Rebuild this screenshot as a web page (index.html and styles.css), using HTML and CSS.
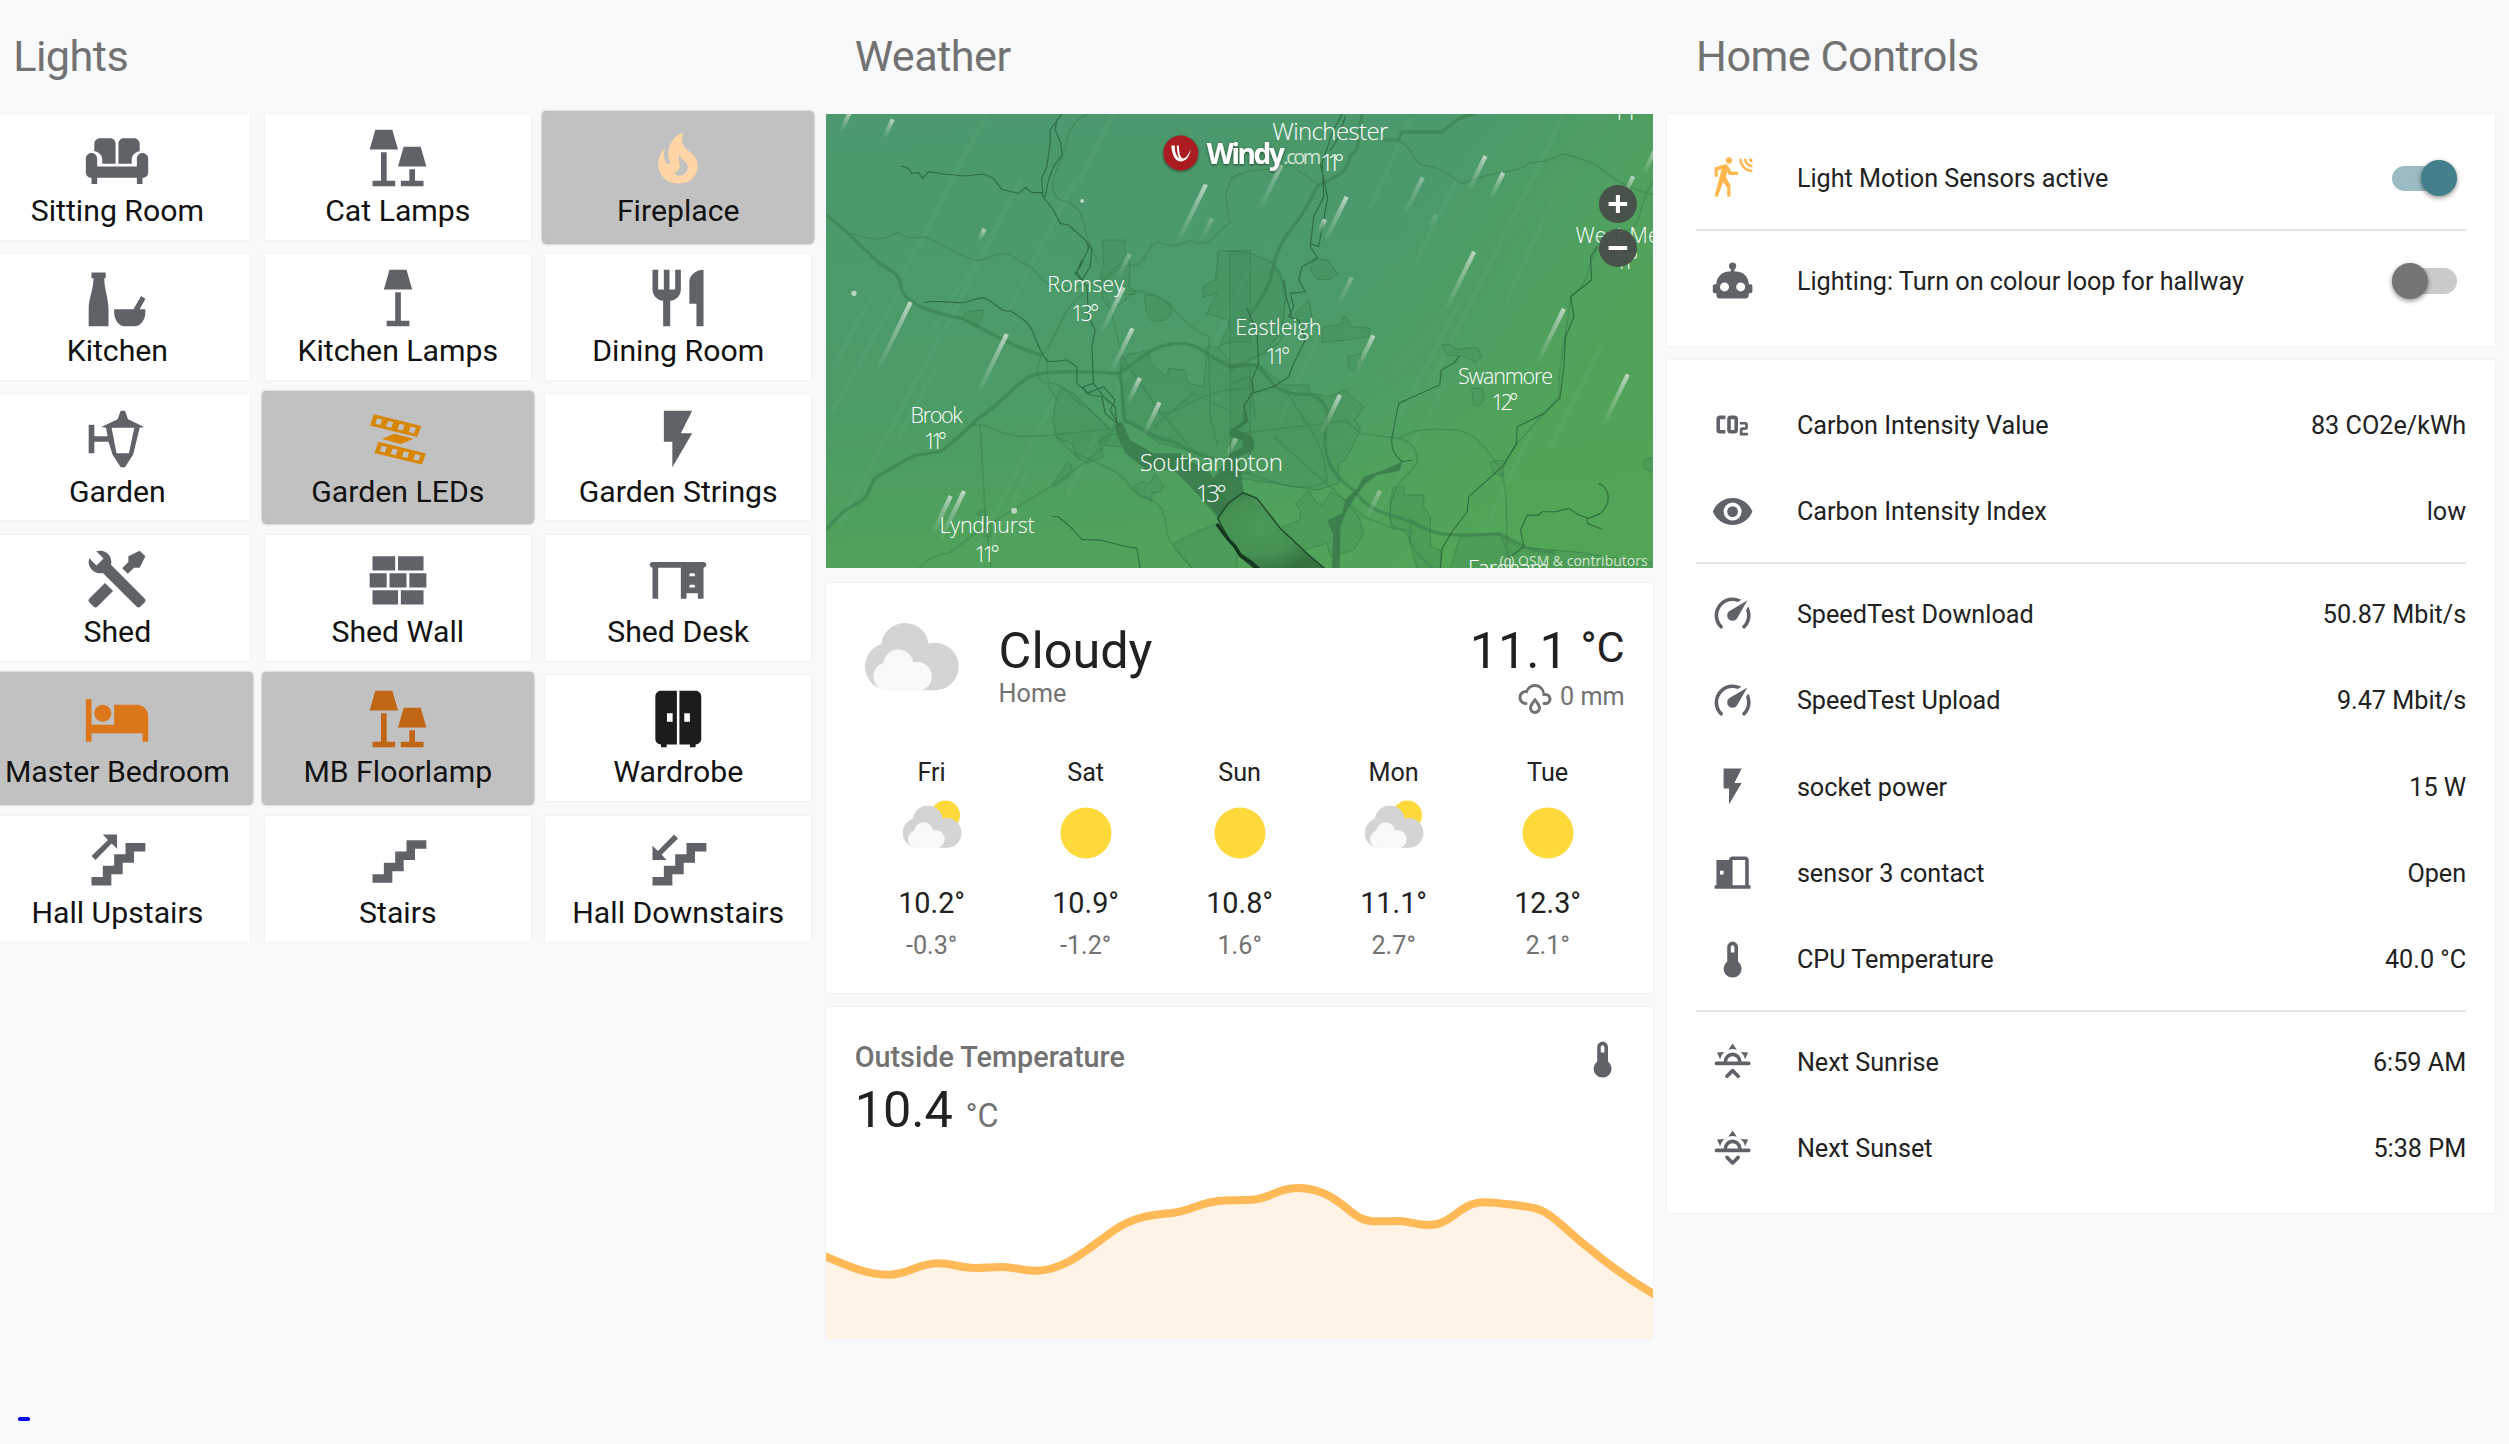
FILE: index.html
```html
<!DOCTYPE html>
<html lang="en">
<head>
<meta charset="utf-8">
<title>Home</title>
<link rel="stylesheet" href="styles.css">
</head>
<body>
<svg class="defs" width="0" height="0">
  <symbol id="lamps" viewBox="0 0 24 24"><path d="M4 2H10L12 9H2Z M6 10H8V20H11V22H3V20H6Z M14 8H20L22 15H12Z M16 16H18V20H21V22H13V20H16Z"/></symbol>
  <symbol id="flash" viewBox="0 0 24 24"><path d="M7,2V13H10V22L17,10H13L17,2H7Z"/></symbol>
  <symbol id="thermometer" viewBox="0 0 24 24"><path d="M15 13V5A3 3 0 0 0 9 5V13A5 5 0 1 0 15 13M12 4A1 1 0 0 1 13 5V8H11V5A1 1 0 0 1 12 4Z"/></symbol>
  <symbol id="speedometer" viewBox="0 0 24 24"><path d="M12,16A3,3 0 0,1 9,13C9,11.88 9.61,10.9 10.5,10.39L20.21,4.77L14.68,14.35C14.18,15.33 13.17,16 12,16M12,3C13.81,3 15.5,3.5 16.97,4.32L14.87,5.53C14,5.19 13,5 12,5A8,8 0 0,0 4,13C4,15.21 4.89,17.21 6.34,18.65H6.35C6.74,19.04 6.74,19.67 6.35,20.06C5.96,20.45 5.32,20.45 4.93,20.07C3.12,18.26 2,15.76 2,13A10,10 0 0,1 12,3M22,13C22,15.76 20.88,18.26 19.07,20.07C18.68,20.45 18.05,20.45 17.66,20.06C17.27,19.67 17.27,19.04 17.66,18.65C19.11,17.2 20,15.21 20,13C20,12 19.81,11 19.46,10.1L20.67,8C21.5,9.5 22,11.18 22,13Z"/></symbol>
  <symbol id="horizon" viewBox="0 0 24 24"><path d="M3,12H7A5,5 0 0,1 12,7A5,5 0 0,1 17,12H21A1,1 0 0,1 22,13A1,1 0 0,1 21,14H3A1,1 0 0,1 2,13A1,1 0 0,1 3,12M15,12A3,3 0 0,0 12,9A3,3 0 0,0 9,12H15M12,2L14.39,5.42C13.65,5.15 12.84,5 12,5C11.16,5 10.35,5.15 9.61,5.42L12,2M3.34,7L7.5,6.65C6.9,7.16 6.36,7.78 5.94,8.5C5.5,9.24 5.25,10 5.11,10.79L3.34,7M20.65,7L18.88,10.79C18.74,10 18.47,9.23 18.05,8.5C17.63,7.78 17.1,7.15 16.5,6.64L20.65,7"/></symbol>
  <symbol id="cloud" viewBox="0 0 95 69">
    <g fill="#d4d4d4"><circle cx="40.6" cy="24.4" r="24"/><circle cx="24.2" cy="44.2" r="23.8"/><circle cx="70.8" cy="44.2" r="23.8"/><rect x="24.2" y="30" width="46.6" height="38"/></g>
    <g fill="#f9f9f9"><circle cx="34" cy="42" r="15"/><circle cx="23.6" cy="54.2" r="14.6"/><circle cx="53" cy="54.2" r="14.6"/><rect x="23.6" y="44" width="29.4" height="24.8"/></g>
  </symbol>
  <symbol id="partly" viewBox="0 0 72 72">
    <circle cx="49.4" cy="18" r="14.6" fill="#fdd93c"/>
    <use href="#cloud" x="6.4" y="8.3" width="59.4" height="43.1"/>
  </symbol>
  <symbol id="sunny" viewBox="0 0 72 72"><circle cx="36" cy="36" r="25.5" fill="#fdd93c"/></symbol>
</svg>

<main class="dashboard">
  <section class="column">
    <h1 class="title">Lights</h1>
    <div class="lights">
      <div class="light"><svg viewBox="0 0 24 24"><path d="M6 5H9.7C10.8 5 11.5 5.9 11.5 7V14H6.8V12.5C6.8 11 5.6 9.8 4 9.6V7C4 5.9 4.9 5 6 5ZM18 5H14.3C13.2 5 12.5 5.9 12.5 7V14H17.2V12.5C17.2 11 18.4 9.8 20 9.6V7C20 5.9 19.1 5 18 5ZM3 10.2C1.9 10.2 1 11.1 1 12.2V17C1 18.1 1.9 19 3 19V21.2H5V19H19V21.2H21V19C22.1 19 23 18.1 23 17V12.2C23 11.1 22.1 10.2 21 10.2C19.9 10.2 19 11.1 19 12.2V15H5V12.2C5 11.1 4.1 10.2 3 10.2Z"/></svg><span>Sitting Room</span></div>
      <div class="light"><svg><use href="#lamps"/></svg><span>Cat Lamps</span></div>
      <div class="light on fire"><svg viewBox="0 0 24 24"><path d="M17.66 11.2C17.43 10.9 17.15 10.64 16.89 10.38C16.22 9.78 15.46 9.35 14.82 8.72C13.33 7.26 13 4.85 13.95 3C13 3.23 12.17 3.75 11.46 4.32C8.87 6.4 7.85 10.07 9.07 13.22C9.11 13.32 9.15 13.42 9.15 13.55C9.15 13.77 9 13.97 8.8 14.05C8.57 14.15 8.33 14.09 8.14 13.93C8.08 13.88 8.04 13.83 8 13.76C6.87 12.33 6.69 10.28 7.45 8.64C5.78 10 4.87 12.3 5 14.47C5.06 14.97 5.12 15.47 5.29 15.97C5.43 16.57 5.7 17.17 6 17.7C7.08 19.43 8.95 20.67 10.96 20.92C13.1 21.19 15.39 20.8 17.03 19.32C18.86 17.66 19.5 15 18.56 12.72L18.43 12.46C18.22 12 17.66 11.2 17.66 11.2M14.5 17.5C14.22 17.74 13.76 18 13.4 18.1C12.28 18.5 11.16 17.94 10.5 17.28C11.69 17 12.4 16.12 12.61 15.23C12.78 14.43 12.46 13.77 12.33 13C12.21 12.26 12.23 11.63 12.5 10.94C12.69 11.32 12.89 11.7 13.13 12C13.9 13 15.11 13.44 15.37 14.8C15.41 14.94 15.43 15.08 15.43 15.23C15.46 16.05 15.1 16.95 14.5 17.5Z"/></svg><span>Fireplace</span></div>

      <div class="light"><svg viewBox="0 0 24 24"><path d="M3 3H8V5H7.5C7.5 9 9 12 9 16V22H2V16C2 12 3.7 9 3.7 5H3ZM11 16H17.8L20.5 11.3L22 12.3L20 16H22V17C22 19.5 20.5 22 18.2 22H14.8C12.5 22 11 19.5 11 17Z"/></svg><span>Kitchen</span></div>
      <div class="light"><svg viewBox="0 0 24 24"><path d="M9 2H15L17 9H7Z M11 10H13V20H16V22H8V20H11Z"/></svg><span>Kitchen Lamps</span></div>
      <div class="light"><svg viewBox="0 0 24 24"><path d="M11,9H9V2H7V9H5V2H3V9C3,11.12 4.66,12.84 6.75,12.97V22H9.25V12.97C11.34,12.84 13,11.12 13,9V2H11V9M16,6V14H18.5V22H21V2C18.24,2 16,4.24 16,6Z"/></svg><span>Dining Room</span></div>

      <div class="light"><svg viewBox="0 0 24 24"><path fill-rule="evenodd" d="M2 7H4V11H8.7L8.1 8L6.5 7.8L12.2 5L13.3 2H14.8L15.9 5L21.6 7.8L20 8L17.7 17.5L14.8 22H13.3L10.4 17.5L9 13H4V17H2ZM10.1 8L11.8 17H16.2L18.1 8Z"/></svg><span>Garden</span></div>
      <div class="light on led"><svg viewBox="0 0 24 24"><defs><path id="strip" fill-rule="evenodd" d="M0 0H1V1H0Z M.09 .26V.76H.2V.26Z M.32 .26V.76H.43V.26Z M.56 .26V.76H.67V.26Z M.8 .26V.76H.91V.26Z"/></defs><use href="#strip" transform="matrix(16.7 4.1 -1.4 3.9 3.5 3.3)"/><path d="M6.4 12L10.7 10.1L17.5 11.9L13 13.8Z"/><use href="#strip" transform="matrix(16.7 4.1 -1.4 3.9 5.1 13)"/></svg><span>Garden LEDs</span></div>
      <div class="light"><svg><use href="#flash"/></svg><span>Garden Strings</span></div>

      <div class="light"><svg viewBox="0 0 24 24"><path d="M21.71 20.29L20.29 21.71A1 1 0 0 1 18.88 21.71L7 9.85A3.81 3.81 0 0 1 6 10A4 4 0 0 1 2.22 4.7L4.76 7.24L5.29 6.71L6.71 5.29L7.24 4.76L4.7 2.22A4 4 0 0 1 10 6A3.81 3.81 0 0 1 9.85 7L21.71 18.88A1 1 0 0 1 21.71 20.29M2.29 18.88A1 1 0 0 0 2.29 20.29L3.71 21.71A1 1 0 0 0 5.12 21.71L10.59 16.25L7.76 13.42M20 2L16 4V6L13.83 8.17L15.83 10.17L18 8H20L22 4Z"/></svg><span>Shed</span></div>
      <div class="light"><svg viewBox="0 0 24 24"><path d="M3,16H12V21H3V16M2,10H8V15H2V10M9,10H15V15H9V10M16,10H22V15H16V10M13,16H21V21H13V16M3,4H11V9H3V4M12,4H21V9H12V4Z"/></svg><span>Shed Wall</span></div>
      <div class="light"><svg viewBox="0 0 24 24"><path d="M3 6H21C21.55 6 22 6.45 22 7C22 7.55 21.55 8 21 8V19H19V17H15V19H13V8H5V19H3V8C2.45 8 2 7.55 2 7C2 6.45 2.45 6 3 6M16 10.5V11H18V10.5C18 10.22 17.78 10 17.5 10H16.5C16.22 10 16 10.22 16 10.5M16 14.5V15H18V14.5C18 14.22 17.78 14 17.5 14H16.5C16.22 14 16 14.22 16 14.5Z"/></svg><span>Shed Desk</span></div>

      <div class="light on bed"><svg viewBox="0 0 24 24"><path d="M19 7H11V14H3V5H1V20H3V17H21V20H23V11C23 8.79 21.21 7 19 7M7 13C8.66 13 10 11.66 10 10C10 8.34 8.66 7 7 7C5.34 7 4 8.34 4 10C4 11.66 5.34 13 7 13Z"/></svg><span>Master Bedroom</span></div>
      <div class="light on floorlamp"><svg><use href="#lamps"/></svg><span>MB Floorlamp</span></div>
      <div class="light wardrobe"><svg viewBox="0 0 24 24"><path fill-rule="evenodd" d="M11.6 2H6C4.9 2 4 2.9 4 4V19C4 20.1 4.9 21 6 21V22H8V21H11.6ZM8.1 10H10.1V13H8.1Z M12.5 2H18.2C19.3 2 20.2 2.9 20.2 4V19C20.2 20.1 19.3 21 18.2 21V22H16.2V21H12.5ZM14.2 10V13H16.2V10Z"/></svg><span>Wardrobe</span></div>

      <div class="light"><svg viewBox="0 0 24 24"><path d="M22 6V9H18V13H14V17H10V21H3V18H7V14H11V10H15V6Z M12 8V3H7L8.8 4.9L3 10.6L4.4 12L10.1 6.2Z"/></svg><span>Hall Upstairs</span></div>
      <div class="light"><svg viewBox="0 0 24 24"><path d="M15,5V9H11V13H7V17H3V20H10V16H14V12H18V8H22V5H15Z"/></svg><span>Stairs</span></div>
      <div class="light"><svg viewBox="0 0 24 24"><path d="M22 6V9H18V13H14V17H10V21H3V18H7V14H11V10H15V6Z M3 7V12H8L6.2 10.1L12 4.4L10.6 3L4.9 8.8Z"/></svg><span>Hall Downstairs</span></div>
    </div>
  </section>

  <section class="column">
    <h1 class="title">Weather</h1>
    <div class="map">
      <svg viewBox="0 0 827 454.6" preserveAspectRatio="none">
        <defs>
          <linearGradient id="land" x1=".3" y1="0" x2=".4" y2="1"><stop offset="0" stop-color="#4b996c"/><stop offset=".6" stop-color="#4c9b68"/><stop offset=".8" stop-color="#4e9f5f"/><stop offset="1" stop-color="#51a35a"/></linearGradient>
          <linearGradient id="east" x1="0" y1="0" x2="1" y2=".35"><stop offset=".7" stop-color="#52a45a" stop-opacity="0"/><stop offset="1" stop-color="#53a555" stop-opacity=".8"/></linearGradient>
          <linearGradient id="fade" x1="0" y1="0" x2="0" y2="1"><stop offset="0" stop-color="#cfdfd1" stop-opacity=".85"/><stop offset=".35" stop-color="#c3dac8" stop-opacity=".5"/><stop offset="1" stop-color="#b5d4bd" stop-opacity=".03"/></linearGradient>
          <rect id="gust" x="-6.5" y="0" width="13" height="1" fill="url(#fade)"/>
          <radialGradient id="water" cx=".4" cy=".45" r=".6"><stop offset="0" stop-color="#4a9a58"/><stop offset=".6" stop-color="#459052"/><stop offset="1" stop-color="#35723f"/></radialGradient>
          <filter id="glow" x="-20%" y="-30%" width="140%" height="170%"><feDropShadow dx="0" dy="1" stdDeviation="1.8" flood-color="#000" flood-opacity=".55"/></filter>
        </defs>
        <rect width="827" height="455" fill="url(#land)"/>
        <rect width="827" height="455" fill="url(#east)"/>

        <!-- western half -->
        <g transform="translate(-6 -14) scale(.33333)" class="geo">
          <g class="streaks"><path d="M500 42L250 520M600 240L380 680M240 570L40 930M360 710L60 1270M760 250L560 640M470 480L340 690M880 42L780 240M960 740L740 1190M700 900L480 1330M620 1120L480 1400M350 800L230 1020M150 600L40 800"/></g>
          <g class="town">
            <path d="M848 420H914V450L930 490L926 560L944 572V584L910 582L870 545L835 560L850 490Z"/>
            <path d="M975 585L1010 588L1052 612V645L1035 660L995 665L978 630Z"/>
            <path d="M1260 452H1195L1185 540L1148 560V590L1190 580L1160 640L1225 660V680L1200 735L1240 725H1290V452Z"/>
            <path d="M725 862L760 880L815 935L870 990L840 1030L850 1070L800 1090L770 1070L755 1030L710 1015L698 960L708 900Z"/>
            <path d="M425 655L440 635L490 630L488 645L470 680Z"/>
            <path d="M900 770L985 750L990 790L1040 830L1045 805L1095 810L1103 850L1150 860L1160 740L1195 740L1240 800L1290 800V1120L1180 1130L1100 1050L1020 1030L960 990L910 960Z"/>
            <path d="M695 1155L740 1090L755 1095L750 1125L705 1160Z"/>
            <path d="M935 1165L960 1145L990 1150L1005 1120L1030 1160L1020 1175L995 1180V1202L960 1190Z"/>
            <path d="M1060 1330L1120 1300L1190 1270L1250 1350V1405H1115Z"/>
            <path d="M470 1240Q470 1230 495 1230L500 1270L512 1275V1310H490L495 1260Z"/>
            <path d="M835 1025L850 1010L890 1000L905 1040L850 1035Z"/>
          </g>
          <path class="deep" d="M880 975L905 965L930 1020L1000 1060L1080 1060L1170 1120L1225 1210L1195 1255L1130 1180L1060 1110L980 1110L915 1060Z"/>
          <g class="road wide"><path d="M18 345C80 390 120 435 180 492C215 512 240 520 245 570C260 610 320 635 425 655L580 735L660 765M18 1290C60 1240 80 1225 120 1205C150 1190 145 1155 170 1130L280 1067L360 1055C400 1030 430 995 480 950C540 915 600 835 640 825C700 810 790 815 895 820C950 790 990 730 1080 730C1150 730 1180 790 1240 800M895 820C915 860 900 910 915 965C960 970 990 1015 1040 1020C1080 1025 1100 1060 1180 1075"/></g>
          <g class="road"><path d="M95 400C150 420 180 425 235 398C270 425 300 405 320 412C370 430 420 475 475 482C510 475 530 455 575 463C600 500 620 480 650 520C680 560 720 575 790 555C850 560 880 490 950 495C980 480 985 425 1015 427C1060 440 1070 440 1110 422C1180 450 1170 400 1230 370C1210 300 1210 240 1260 220M800 42C740 70 740 130 730 165C700 220 680 280 720 300C790 310 790 370 800 410L835 490M790 580C710 640 730 690 665 765C650 800 640 840 680 850L710 900M680 770Q680 850 690 850C740 850 750 905 800 920L870 985M850 560L880 660L905 770L1020 935L1125 1060M905 490C860 510 840 560 850 600C870 640 880 630 945 572C1060 580 1080 680 1165 710L1170 950L1190 1030M1020 940C1100 940 1110 870 1290 865M480 975L495 1240L512 1400M450 975C500 965 540 1005 600 1010L700 1005L880 985L850 1040L790 1090L700 1155L495 1280L385 1360C330 1365 320 1385 295 1405M770 1060C870 1110 900 1110 935 1165C1000 1220 1030 1180 1040 1300C1060 1360 1100 1380 1115 1405M920 770L895 820M1000 980L1120 880L1240 940M710 1010L780 1080"/></g>
          <g class="river"><path d="M245 198L265 205L275 220L295 218L308 235L325 215L370 222L435 228L490 222L520 235L545 268L595 280L617 262L635 278L665 278M725 42L690 90V130L680 200L665 235L668 290L700 330L720 370L745 375L800 425L805 445L780 500L765 520L800 560L805 650L825 690L815 740L820 850L850 890L885 920L890 970M710 60L705 90L722 130L725 165L700 200L685 240L675 290M313 608C340 600 360 605 425 608C460 605 470 590 492 594C520 600 540 640 570 632C600 650 630 670 640 700C660 750 670 780 690 785L740 780L770 800V850L810 885L845 890L855 940L890 970M800 425L815 450L810 500L785 540L770 515L785 480M820 850L790 860L800 880L850 860L885 900L870 930L895 975M698 1250L715 1250L750 1280L785 1318L840 1320L910 1338L950 1345L960 1405"/></g>
          <g class="dots"><circle cx="102" cy="580" r="8"/><circle cx="786" cy="303" r="6"/><circle cx="582" cy="1232" r="9"/></g>
          <g>
            <use href="#gust" transform="translate(90 36) rotate(25) scale(1 62)"/>
            <use href="#gust" transform="translate(218 58) rotate(25) scale(1 60)"/>
            <use href="#gust" transform="translate(493 387) rotate(25) scale(1 38)"/>
            <use href="#gust" transform="translate(1157 253) rotate(26) scale(1 190)"/>
            <use href="#gust" transform="translate(272 606) rotate(26) scale(1 230)"/>
            <use href="#gust" transform="translate(560 702) rotate(26) scale(1 200)"/>
            <use href="#gust" transform="translate(910 562) rotate(26) scale(1 150)"/>
            <use href="#gust" transform="translate(937 685) rotate(26) scale(1 145)"/>
            <use href="#gust" transform="translate(959 834) rotate(26) scale(1 85)"/>
            <use href="#gust" transform="translate(1018 907) rotate(26) scale(1 112)"/>
            <use href="#gust" transform="translate(392 1188) rotate(26) scale(1 125)"/>
            <use href="#gust" transform="translate(432 1173) rotate(26) scale(1 165)"/>
            <use href="#gust" transform="translate(1175 355) rotate(26) scale(1 75)" opacity=".4"/>
            <use href="#gust" transform="translate(1247 1015) rotate(26) scale(1 60)"/>
            <use href="#gust" transform="translate(928 462) rotate(26) scale(1 90)" opacity=".5"/>
          </g>
        </g>

        <!-- eastern half -->
        <g transform="translate(404 -14) scale(.33333)" class="geo">
          <g class="streaks"><path d="M1000 42L600 850M680 240L560 480M960 310L830 600M260 720L140 980M640 860L420 1290M1110 740L960 1040M680 620L480 1000M900 1000L760 1300M60 500L-60 760M540 60L420 320"/></g>
          <g class="town">
            <path d="M0 452L60 460L130 488L150 520L165 600L150 700L100 760L0 800Z"/>
            <path d="M250 475L290 480L320 520L300 538H260L243 515Z"/>
            <path d="M160 855L235 855L240 880L300 890L340 870L400 920L375 960L390 990L345 1080L325 1090V1150L260 1170L0 1130V800L80 790Z"/>
            <path d="M280 680L325 675L345 648L365 680L418 685L415 710L330 722L275 725Z"/>
            <path d="M635 735L655 732L680 748L740 742L755 770L735 787L705 770L650 765Z"/>
            <path d="M725 865H755L760 900L745 918L730 915Z"/>
            <path d="M195 640L235 600L245 650L225 680L205 670Z"/><path d="M355 770L390 760L392 790L370 812L355 800Z"/>
            <path d="M490 1160H520V1185H580V1220L600 1250V1340L630 1350V1405H560L530 1300L480 1270V1200Z"/>
            <path d="M690 1310L800 1300L860 1340L1030 1355L1269 1390V1407H660Z"/>
            <path d="M780 1085L820 1080L818 1130L790 1120Z"/><path d="M1269 1072L1240 1080V1105L1269 1118Z"/>
            <path d="M155 1280L210 1260V1230L195 1210L235 1170L260 1212H280L300 1175L345 1200L385 1250L400 1300L370 1350L300 1370L290 1330L220 1350Z"/>
          </g>
          <g class="road wide"><path d="M395 42C380 130 390 150 360 165C350 220 320 230 265 255C240 290 230 330 195 370C130 450 130 500 120 540C100 590 80 610 65 640M460 120H505L515 96H635C670 70 680 50 730 42M0 800C80 780 90 800 130 855C180 890 210 880 245 885C320 920 280 970 283 1030C290 1090 310 1130 370 1170C420 1240 470 1240 545 1265C620 1310 640 1308 810 1302C880 1340 890 1350 970 1358"/></g>
          <g class="road"><path d="M0 235C60 200 120 215 180 195L265 255M505 120C570 160 530 190 600 200C670 215 670 250 700 250C790 210 870 220 895 188C950 190 980 165 1000 162C1060 180 1100 190 1120 215C1160 240 1180 260 1269 285M1269 240C1220 320 1240 340 1210 380L1100 450C1060 500 1090 540 1020 590C1010 700 980 800 985 890L860 1030L820 1090M130 500C180 560 160 600 160 700C150 740 100 760 0 810M165 860C200 950 280 1000 290 1140C250 1170 200 1180 0 1100M30 1000L290 970L345 960L390 1000L500 1015C540 1000 560 980 680 990C740 1000 780 1060 810 1110C840 1200 820 1260 835 1400M480 1010C560 1020 560 1060 560 1090L505 1150C480 1200 470 1230 485 1280L545 1295C520 1350 590 1370 600 1405M130 1010L400 1250L500 1290M545 1265C520 1320 560 1370 610 1405M810 1302L835 1370M0 850L60 830L75 960"/></g>
          <g class="river"><path d="M335 42L305 100L275 190L280 290L250 350L240 440L262 475L215 500L205 540L225 575L180 580L190 620L175 650L205 660L225 720L190 790L175 830L130 860L65 880L40 920L50 960L0 1000M345 50L320 120L300 150M270 190L292 295L265 440L240 430M50 625L80 700L85 790L65 840L70 875M685 770L670 790L632 810L628 855L560 885L505 910L495 960L485 1010C480 1040 490 1065 515 1085L545 1080M1100 440L1080 470L1083 540L1020 590L1030 650L1005 710L1000 800L988 895L940 940L860 980L858 1030L820 1095L715 1190L710 1235L665 1295L635 1345L630 1405M1105 1150C1130 1160 1150 1200 1110 1240L1075 1255L1045 1245L1015 1225L975 1235L935 1235L925 1245L890 1245L870 1290L880 1340L840 1370M1070 1255V1270L1112 1287M160 540L170 600L185 650"/></g>
          <path class="deep" d="M515 1085L508 1112L440 1125L405 1150L375 1190L345 1240L330 1280L328 1405H305L308 1300L290 1262L335 1240L345 1200L380 1165L400 1130L460 1110Z"/>
          <path class="deep" d="M40 900L55 965L20 990L60 1005Q85 1040 60 1055L25 1070L40 1175L0 1210L-35 1250L-80 1180L0 1060L40 1040L35 1020L0 1010V990L38 965Z"/>
          <path d="M-38 1255L-10 1215L0 1205L38 1178L80 1195L150 1285L235 1365L285 1407H75L30 1370L0 1325Z" fill="url(#water)" stroke="#1c4527" stroke-width="4"/>
          <path d="M-38 1275L-20 1300L0 1325L15 1340L30 1365L60 1385L85 1407" stroke="#14361e" stroke-width="10" stroke-dasharray="14 5 22 3"/>
          <g>
            <use href="#gust" transform="translate(765 168) rotate(26) scale(1 115)"/>
            <use href="#gust" transform="translate(818 218) rotate(26) scale(1 84)"/>
            <use href="#gust" transform="translate(577 232) rotate(26) scale(1 120)" opacity=".6"/>
            <use href="#gust" transform="translate(349 290) rotate(26) scale(1 142)"/>
            <use href="#gust" transform="translate(284 358) rotate(26) scale(1 42)"/>
            <use href="#gust" transform="translate(731 455) rotate(26) scale(1 190)"/>
            <use href="#gust" transform="translate(364 532) rotate(26) scale(1 95)" opacity=".5"/>
            <use href="#gust" transform="translate(1000 626) rotate(26) scale(1 180)"/>
            <use href="#gust" transform="translate(429 706) rotate(26) scale(1 115)"/>
            <use href="#gust" transform="translate(329 885) rotate(26) scale(1 122)"/>
            <use href="#gust" transform="translate(1192 823) rotate(26) scale(1 168)"/>
            <use href="#gust" transform="translate(1208 229) rotate(26) scale(1 70)"/>
            <use href="#gust" transform="translate(1276 145) rotate(26) scale(1 82)"/>
            <use href="#gust" transform="translate(449 1172) rotate(26) scale(1 88)" opacity=".6"/>
            <use href="#gust" transform="translate(153 195) rotate(26) scale(1 145)" opacity=".7"/>
            <use href="#gust" transform="translate(617 344) rotate(26) scale(1 45)" opacity=".3"/>
          </g>
        </g>

        <g class="places">
          <text x="259.5" y="177.5" textLength="77">Romsey</text><text x="259" y="206.5" textLength="28">13°</text>
          <text x="110.5" y="308.5" textLength="52">Brook</text><text x="109.5" y="335" textLength="23">11°</text>
          <text x="161" y="418.5" textLength="95">Lyndhurst</text><text x="161" y="448" textLength="25">11°</text>
          <text x="385" y="356.5" textLength="143" class="city">Southampton</text><text x="385" y="387.500" textLength="31" class="city">13°</text>
          <text x="504" y="26.500" textLength="116" class="city">Winchester</text><text x="506" y="57.500" textLength="24" class="city">11°</text>
          <text x="452" y="220.500" textLength="86">Eastleigh</text><text x="451.500" y="250" textLength="25">11°</text>
          <text x="679" y="269.500" textLength="95">Swanmore</text><text x="678.500" y="296" textLength="27">12°</text>
          <text x="749" y="128.500" class="start">West Meon</text><text x="800" y="155" textLength="23">11°</text>
          <text x="682" y="462" textLength="81">Fareham</text><text x="803" y="5.500">11°</text>
        </g>
        <text x="821" y="452" class="credit" textLength="148">(c) OSM &amp; contributors</text>

        <g filter="url(#glow)">
          <circle cx="354.500" cy="39" r="17.400" fill="#aa1c22"/>
          <path d="M345 31.500C346 42 349 47 354 47.500C360 47.500 363.500 42 364.500 35C362 41 359.500 44.500 357 44.500C353 43.500 353 37 352.500 31.500H350.500C351 38 351.500 43 353.500 45C349.500 42 348.500 37 348.500 31.500Z" fill="#fff"/>
          <text x="380.500" y="49.500" class="brand" textLength="78">Windy</text>
        </g>
        <text x="457" y="50" class="brand-suffix" textLength="38">.com</text>
        <g fill="#474d48" fill-opacity=".94"><circle cx="791.300" cy="90" r="19"/><circle cx="791.300" cy="134" r="19"/></g>
        <path d="M782 90H800.600M791.300 81V99M782 134H800.600" stroke="#fff" stroke-width="4" fill="none"/>
      </svg>
    </div>

    <div class="card weather">
      <div class="now">
        <svg class="now-icon" viewBox="0 0 115 115"><use href="#cloud" x="9.500" y="11.500" width="94.500" height="68.600"/></svg>
        <div class="now-name"><strong>Cloudy</strong><span>Home</span></div>
        <div class="now-value">
          <strong>11.1 <sup>°C</sup></strong>
          <span class="rain"><svg viewBox="0 0 24 24"><path d="M6,14.030A1,1 0 0,1 7,15.030C7,15.580 6.550,16.030 6,16.030C3.240,16.030 1,13.790 1,11.030C1,8.270 3.240,6.030 6,6.030C7,3.680 9.300,2.030 12,2.030C15.430,2.030 18.240,4.690 18.500,8.060L19,8.030A4,4 0 0,1 23,12.030C23,14.230 21.210,16.030 19,16.030H18C17.450,16.030 17,15.580 17,15.030C17,14.470 17.450,14.030 18,14.030H19A2,2 0 0,0 21,12.030A2,2 0 0,0 19,10.030H17V9.030C17,6.270 14.760,4.030 12,4.030C9.500,4.030 7.450,5.840 7.060,8.210C6.730,8.090 6.370,8.030 6,8.030A3,3 0 0,0 3,11.030A3,3 0 0,0 6,14.030M12,14.150C12.180,14.390 12.370,14.660 12.560,14.940C13,15.560 14,17.030 14,18C14,19.110 13.100,20 12,20A2,2 0 0,1 10,18C10,17.030 11,15.560 11.440,14.940C11.630,14.660 11.820,14.400 12,14.150M12,11.030L11.500,11.590C11.500,11.590 10.650,12.550 9.790,13.810C8.930,15.060 8,16.560 8,18A4,4 0 0,0 12,22A4,4 0 0,0 16,18C16,16.560 15.070,15.060 14.210,13.810C13.350,12.550 12.500,11.590 12.500,11.590"/></svg>0 mm</span>
        </div>
      </div>
      <div class="forecast">
        <div class="day"><span>Fri</span><svg><use href="#partly"/></svg><b>10.2°</b><i>-0.3°</i></div>
        <div class="day"><span>Sat</span><svg><use href="#sunny"/></svg><b>10.9°</b><i>-1.2°</i></div>
        <div class="day"><span>Sun</span><svg><use href="#sunny"/></svg><b>10.8°</b><i>1.6°</i></div>
        <div class="day"><span>Mon</span><svg><use href="#partly"/></svg><b>11.1°</b><i>2.7°</i></div>
        <div class="day"><span>Tue</span><svg><use href="#sunny"/></svg><b>12.3°</b><i>2.1°</i></div>
      </div>
    </div>

    <div class="card sensor">
      <div class="sensor-head"><span>Outside Temperature</span><svg class="icon"><use href="#thermometer"/></svg></div>
      <div class="sensor-value">10.4<small>°C</small></div>
      <svg class="graph" viewBox="0 0 827 171" preserveAspectRatio="none">
        <path fill="#fef3e4" d="M0 88.700C20 97 40 106.700 62 106.700C84 106.700 90 95.200 112 95.200C127 95.200 133 100 149.400 100C160 100 165 99 176 99C190 99 195 102.700 208.400 102.700C240 102.700 262 80 288.700 61.700C308 48.500 328 46.500 346 45C368 42 375 33 398.500 32.500C410 32 414 32.600 425.300 31.800C446 30 450 20 472.400 20C490 20 503 27 513.700 35C527 45 532 53.300 551 53.300C560 53.300 565 53 572.600 53C584 53 588 57 602 57C627 57 632 34.300 658.300 34.300C668 34.300 680 36 690.400 37.300C708 39.500 714 41 722.500 46.700C733 54 745 66.500 760 78.300C782 97 803 112 827 126V171H0Z"/>
        <path fill="none" stroke="#ffb957" stroke-width="8" d="M-6 86L0 88.700C20 97 40 106.700 62 106.700C84 106.700 90 95.200 112 95.200C127 95.200 133 100 149.400 100C160 100 165 99 176 99C190 99 195 102.700 208.400 102.700C240 102.700 262 80 288.700 61.700C308 48.500 328 46.500 346 45C368 42 375 33 398.500 32.500C410 32 414 32.600 425.300 31.800C446 30 450 20 472.400 20C490 20 503 27 513.700 35C527 45 532 53.300 551 53.300C560 53.300 565 53 572.600 53C584 53 588 57 602 57C627 57 632 34.300 658.300 34.300C668 34.300 680 36 690.400 37.300C708 39.500 714 41 722.500 46.700C733 54 745 66.500 760 78.300C782 97 803 112 827 126L835 130"/>
      </svg>
    </div>
  </section>

  <section class="column">
    <h1 class="title">Home Controls</h1>
    <div class="card entities">
      <div class="row active"><svg class="icon" viewBox="0 0 24 24"><path d="M10,0.200C9,0.200 8.200,1 8.200,2C8.200,3 9,3.800 10,3.800C11,3.800 11.800,3 11.800,2C11.800,1 11,0.200 10,0.200M15.670,1A7.330,7.330 0 0,0 23,8.330V7A6,6 0 0,1 17,1H15.670M18.330,1C18.330,3.580 20.420,5.670 23,5.670V4.330C21.160,4.330 19.670,2.840 19.670,1H18.330M21,1A2,2 0 0,0 23,3V1H21M7.920,4.030C7.750,4.030 7.580,4.060 7.420,4.110L2,5.800V11H3.800V7.330L5.910,6.670L2,22H3.800L6.670,13.890L9,17V22H10.800V15.590L8.310,11.050L9.040,8.180L10.120,10H15V8.200H11.380L9.380,4.870C9.080,4.370 8.540,4.030 7.920,4.030Z"/></svg><span>Light Motion Sensors active</span><div class="switch checked"></div></div>
      <hr>
      <div class="row"><svg class="icon" viewBox="0 0 24 24"><path d="M12,2A2,2 0 0,1 14,4C14,4.740 13.600,5.390 13,5.730V7H14A7,7 0 0,1 21,14H22A1,1 0 0,1 23,15V18A1,1 0 0,1 22,19H21V20A2,2 0 0,1 19,22H5A2,2 0 0,1 3,20V19H2A1,1 0 0,1 1,18V15A1,1 0 0,1 2,14H3A7,7 0 0,1 10,7H11V5.730C10.400,5.390 10,4.740 10,4A2,2 0 0,1 12,2M7.500,13A2.500,2.500 0 0,0 5,15.500A2.500,2.500 0 0,0 7.500,18A2.500,2.500 0 0,0 10,15.500A2.500,2.500 0 0,0 7.500,13M16.500,13A2.500,2.500 0 0,0 14,15.500A2.500,2.500 0 0,0 16.500,18A2.500,2.500 0 0,0 19,15.500A2.500,2.500 0 0,0 16.500,13Z"/></svg><span>Lighting: Turn on colour loop for hallway</span><div class="switch"></div></div>
    </div>
    <div class="card entities">
      <div class="row"><svg class="icon" viewBox="0 0 24 24"><path d="M5,7A2,2 0 0,0 3,9V15A2,2 0 0,0 5,17H8V15H5V9H8V7H5M11,7A2,2 0 0,0 9,9V15A2,2 0 0,0 11,17H13A2,2 0 0,0 15,15V9A2,2 0 0,0 13,7H11M11,9H13V15H11V9M16,10.500V12H19V13.500H17.500A1.500,1.500 0 0,0 16,15V18H20.500V16.500H17.500V15H19A1.500,1.500 0 0,0 20.500,13.500V12A1.500,1.500 0 0,0 19,10.500H16Z"/></svg><span>Carbon Intensity Value</span><em>83 CO2e/kWh</em></div>
      <div class="row"><svg class="icon" viewBox="0 0 24 24"><path d="M12,9A3,3 0 0,0 9,12A3,3 0 0,0 12,15A3,3 0 0,0 15,12A3,3 0 0,0 12,9M12,17A5,5 0 0,1 7,12A5,5 0 0,1 12,7A5,5 0 0,1 17,12A5,5 0 0,1 12,17M12,4.500C7,4.500 2.730,7.610 1,12C2.730,16.390 7,19.500 12,19.500C17,19.500 21.270,16.390 23,12C21.270,7.610 17,4.500 12,4.500Z"/></svg><span>Carbon Intensity Index</span><em>low</em></div>
      <hr>
      <div class="row"><svg class="icon"><use href="#speedometer"/></svg><span>SpeedTest Download</span><em>50.87 Mbit/s</em></div>
      <div class="row"><svg class="icon"><use href="#speedometer"/></svg><span>SpeedTest Upload</span><em>9.47 Mbit/s</em></div>
      <div class="row"><svg class="icon"><use href="#flash"/></svg><span>socket power</span><em>15 W</em></div>
      <div class="row"><svg class="icon" viewBox="0 0 24 24"><path d="M12,3C10.890,3 10,3.890 10,5H3V19H2V21H22V19H21V5C21,3.890 20.110,3 19,3H12M12,5H19V19H12V5M5,11H7V13H5V11Z"/></svg><span>sensor 3 contact</span><em>Open</em></div>
      <div class="row"><svg class="icon"><use href="#thermometer"/></svg><span>CPU Temperature</span><em>40.0 °C</em></div>
      <hr>
      <div class="row"><svg class="icon" viewBox="0 0 24 24"><use href="#horizon"/><path d="M12.710,16.300L15.820,19.410C16.210,19.800 16.210,20.430 15.820,20.820C15.430,21.210 14.800,21.210 14.410,20.820L12,18.410L9.590,20.820C9.200,21.210 8.570,21.210 8.180,20.820C7.790,20.430 7.790,19.800 8.180,19.410L11.290,16.300C11.500,16.100 11.740,16 12,16C12.260,16 12.500,16.100 12.710,16.300Z"/></svg><span>Next Sunrise</span><em>6:59 AM</em></div>
      <div class="row"><svg class="icon" viewBox="0 0 24 24"><use href="#horizon"/><path d="M12.710,20.710L15.820,17.600C16.210,17.210 16.210,16.570 15.820,16.180C15.430,15.790 14.800,15.790 14.410,16.180L12,18.590L9.590,16.180C9.200,15.790 8.570,15.790 8.180,16.180C7.790,16.570 7.790,17.210 8.180,17.600L11.290,20.710C11.500,20.900 11.740,21 12,21C12.260,21 12.500,20.900 12.710,20.710Z"/></svg><span>Next Sunset</span><em>5:38 PM</em></div>
    </div>
  </section>
</main>
<footer class="marker"></footer>
</body>
</html>
```
FILE: styles.css
```css
html {
  background: #f8f9fb;
  overflow: hidden;
}

body {
  margin: 0;
  zoom: 1.8;
  height: 801px;
  overflow: hidden;
  display: flex;
  flex-direction: column;
  font: 14px/20px Roboto, sans-serif;
  color: #212121;
}

.defs {
  position: absolute;
}

.dashboard {
  display: grid;
  grid-template-columns: repeat(3, 459.8px);
  column-gap: 7.7px;
  margin-left: -8.7px;
  height: 786px;
  flex: none;
}

.column {
  display: flex;
  flex-direction: column;
  gap: 8px;
}

.title {
  box-sizing: border-box;
  margin: 0 0 -8px;
  padding: 0.4px 16px 0;
  height: 63.1px;
  font-size: 24px;
  line-height: 62.4px;
  font-weight: 400;
  letter-spacing: -0.012em;
  color: #727272;
}

/* Light buttons */
.lights {
  display: grid;
  grid-template-columns: repeat(3, 147.8px);
  grid-auto-rows: 70px;
  gap: 8px;
}

.light {
  display: flex;
  flex-direction: column;
  align-items: center;
  background: #fff;
  color: #5f6368;
  box-shadow: 0 0 1px rgba(0, 0, 0, 0.08);
}

.light svg {
  width: 37.8px;
  height: 37.8px;
  margin-top: 5.7px;
  fill: currentColor;
}

.light span {
  font-size: 16.8px;
  line-height: 20px;
  margin-top: 0.5px;
  color: #111;
  white-space: nowrap;
}

.light.on {
  background: #c1c1c1;
  border-radius: 1px;
  box-shadow: 0 0 0 1.7px #c1c1c1, 0 0.4px 1.2px 1.6px rgba(0, 0, 0, 0.35);
}

.light.fire { color: #ffd5a6; }
.light.led { color: #d88600; }
.light.bed { color: #db761a; }
.light.floorlamp { color: #c16614; }
.light.wardrobe { color: #1c1c1c; }

/* Cards */
.card {
  background: #fff;
  box-shadow: 0 0 1px rgba(0, 0, 0, 0.08);
}

.icon {
  width: 24px;
  height: 24px;
  fill: #5f6368;
}

/* Map */
.map {
  height: 252.6px;
}

.map svg {
  display: block;
  width: 100%;
  height: 100%;
}

.geo { fill: none; stroke-linejoin: round; stroke-linecap: round; }
.road { stroke: #3b7f50; stroke-width: 4.5; stroke-opacity: .5; }
.road.wide { stroke-width: 10; stroke-opacity: .6; }
.river { stroke: #27603a; stroke-width: 3.4; stroke-opacity: .8; }
.town { fill: #3f8856; fill-opacity: .25; stroke: #357548; stroke-opacity: .6; stroke-width: 2.6; }
.deep { fill: #37784a; fill-opacity: .8; }
.dots { fill: #bcd6c2; }
.streaks { stroke: #6db285; stroke-opacity: .14; stroke-width: 14; }

.places text {
  font: 350 21.5px "Open Sans", sans-serif;
  text-anchor: middle;
  fill: #fff;
}

.places .city { font-size: 24px; }
.places .start { text-anchor: start; }

.credit {
  font: 400 14px "Open Sans", sans-serif;
  text-anchor: end;
  fill: #d3e6d0;
}

.brand { font: 700 28px "Open Sans", sans-serif; fill: #fff; }
.brand-suffix { font: 400 20px "Open Sans", sans-serif; fill: #cfe2d4; }

/* Weather */
.weather {
  height: 211.8px;
  padding: 16px 16px 0;
}

.now {
  display: flex;
  height: 64px;
}

.now-icon {
  width: 64px;
  height: 64px;
}

.now-name {
  display: flex;
  flex-direction: column;
  margin-left: 16px;
  padding-top: 6.9px;
}

.now strong {
  font-size: 28px;
  line-height: 30px;
  font-weight: 400;
}

.now-name span {
  line-height: 18px;
  color: #727272;
}

.now-value {
  margin-left: auto;
  padding-top: 6.9px;
  display: flex;
  flex-direction: column;
  align-items: flex-end;
}

.now sup {
  font-size: 24px;
  line-height: 0;
  vertical-align: 3.2px;
}

.rain {
  display: flex;
  align-items: center;
  gap: 4px;
  line-height: 21px;
  color: #727272;
}

.rain svg {
  width: 20px;
  height: 20px;
  margin-top: 1.6px;
  fill: currentColor;
}

.forecast {
  display: grid;
  grid-template-columns: repeat(5, 1fr);
  margin-top: 16px;
}

.day {
  display: flex;
  flex-direction: column;
  align-items: center;
}

.day svg {
  width: 40px;
  height: 40px;
  margin: 3.2px 0 8.6px;
}

.day b {
  font-size: 16px;
  font-weight: 400;
}

.day i {
  margin-top: 4.3px;
  font-style: normal;
  color: #727272;
}

/* Sensor graph */
.sensor {
  height: 184.6px;
  display: flex;
  flex-direction: column;
}

.sensor-head {
  display: flex;
  justify-content: space-between;
  padding: 16.3px 16px 0;
  font-size: 16px;
  font-weight: 500;
  line-height: 24px;
  color: #727272;
}

.sensor-head .icon {
  margin-top: 0.7px;
}

.sensor-value {
  margin-top: 0;
  padding: 0 16px;
  font-size: 28px;
  line-height: 32px;
}

.sensor-value small {
  margin-left: 7px;
  font-size: 18px;
  color: #727272;
}

.graph {
  display: block;
  width: 100%;
  height: 95px;
  margin-top: auto;
}

/* Entity rows */
.entities {
  display: flex;
  flex-direction: column;
  gap: 8px;
  padding: 16px;
}

.row {
  display: flex;
  align-items: center;
  height: 40px;
}

.row .icon {
  margin: 0 8px;
}

.row.active .icon {
  fill: #ffb74d;
}

.row span {
  flex: 1;
  margin-left: 16px;
  padding-top: 1px;
}

.row em {
  padding-top: 1px;
  font-style: normal;
}

.entities hr {
  width: 100%;
  height: 1px;
  margin: 0;
  border: 0;
  background: #e3e3e3;
}

.switch {
  display: flex;
  align-items: center;
  width: 36px;
  height: 14px;
  margin-right: 5px;
  border-radius: 7px;
  background: #cacaca;
}

.switch::before {
  content: "";
  width: 20px;
  height: 20px;
  border-radius: 50%;
  background: #757575;
  box-shadow: 0 1px 3px rgba(0, 0, 0, 0.45);
}

.switch.checked {
  justify-content: flex-end;
  background: #9cbcc3;
}

.switch.checked::before {
  background: #44808b;
}

.marker {
  width: 6.6px;
  height: 1.9px;
  margin: 1.4px 0 0 9.8px;
  border-radius: 1px;
  background: #0000f5;
}
```
